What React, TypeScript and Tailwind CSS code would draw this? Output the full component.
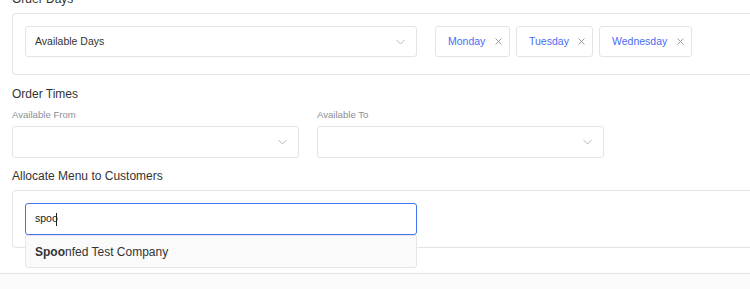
import React from "react";

function Chevron({ className = "" }: { className?: string }) {
  return (
    <svg width="9" height="6" viewBox="0 0 9 6" className={className} fill="none">
      <path d="M0.5 1l4 4 4-4" stroke="#b5b8bd" strokeWidth="1" />
    </svg>
  );
}

function X() {
  return (
    <svg width="7" height="7" viewBox="0 0 7 7" fill="none">
      <path d="M0.5 0.5l6 6M6.5 0.5l-6 6" stroke="#999ca1" strokeWidth="1" />
    </svg>
  );
}

function Tag({ label, w }: { label: string; w: string }) {
  return (
    <div className={`flex h-[31px] items-center justify-between rounded-[3px] border border-[#e3e4e6] bg-white pl-[12px] pr-[7px] ${w}`}>
      <span className="text-[10.5px] text-[#4a6cf7]">{label}</span>
      <X />
    </div>
  );
}

export default function App() {
  return (
    <div className="h-[289px] w-[750px] overflow-hidden bg-white font-['Liberation_Sans',Arial,sans-serif] text-[#333]">
      <div className="pl-3">
        <div className="-mt-[9px] h-[17px] text-[12px] leading-[17px] text-[#333]">Order Days</div>
        <div className="mt-[5px] flex h-[62px] w-[760px] items-start gap-[18px] rounded-[4px] border border-[#e4e4e4] px-[12px] pt-[12px]">
          <div className="flex h-[31px] w-[392px] items-center justify-between rounded-[3px] border border-[#e3e4e6] pl-[9px] pr-[11px]">
            <span className="text-[10.5px]">Available Days</span>
            <Chevron />
          </div>
          <div className="flex gap-[6px]">
            <Tag label="Monday" w="w-[75px]" />
            <Tag label="Tuesday" w="w-[77px]" />
            <Tag label="Wednesday" w="w-[93px]" />
          </div>
        </div>

        <div className="mt-[11px] h-[17px] text-[12px] leading-[17px]">Order Times</div>
        <div className="mt-[5px] flex gap-[18px]">
          <div className="flex flex-col">
            <div className="h-[13px] text-[9.6px] leading-[13px] text-[#8b8f97]">Available From</div>
            <div className="mt-[5px] flex h-[32px] w-[287px] items-center justify-end rounded-[3px] border border-[#e3e4e6] pr-[11px]">
              <Chevron />
            </div>
          </div>
          <div className="flex flex-col">
            <div className="h-[13px] text-[9.6px] leading-[13px] text-[#8b8f97]">Available To</div>
            <div className="mt-[5px] flex h-[32px] w-[287px] items-center justify-end rounded-[3px] border border-[#e3e4e6] pr-[11px]">
              <Chevron />
            </div>
          </div>
        </div>

        <div className="mt-[10px] h-[17px] text-[12px] leading-[17px]">Allocate Menu to Customers</div>
        <div className="relative mt-[5px] h-[58px] w-[760px] rounded-[4px] border border-[#e4e4e4] px-[12px] pt-[12px]">
          <div className="flex h-[32px] w-[392px] items-center rounded-[3px] border border-[#4173f2] pl-[9px]">
            <span className="text-[10.5px] text-[#222]">spoo</span>
            <span className="-ml-[2px] inline-block h-[13px] w-px bg-[#222]" />
          </div>
          <div className="absolute left-[12px] top-[44px] z-10 flex h-[33px] w-[392px] items-center rounded-b-[3px] border border-[#e6e6e6] bg-[#fafafa] pl-[9px] text-[12px] text-[#333]">
            <span className="font-bold">Spoo</span>
            <span>nfed Test Company</span>
          </div>
        </div>
      </div>
      <div className="mt-[25px] h-[40px] border-t border-[#e2e2e2] bg-[#fafafa]" />
    </div>
  );
}
